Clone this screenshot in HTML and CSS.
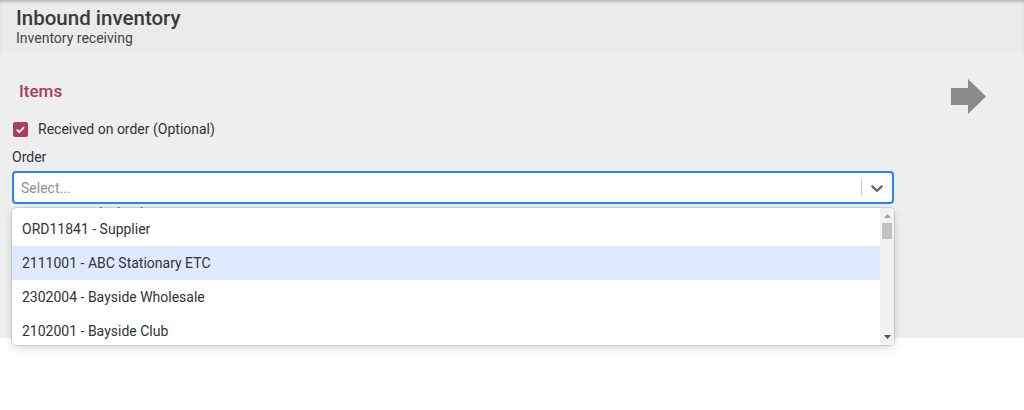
FILE: index.html
```html
<!DOCTYPE html>
<html lang="en">
<head>
    <meta charset="UTF-8">
    <meta name="viewport" content="width=device-width, initial-scale=1.0">
    <title>Inbound inventory</title>
    <link rel="stylesheet" href="styles.css">
</head>
<body>
    <div class="page-header">
        <h1>Inbound inventory</h1>
        <div class="subtitle">Inventory receiving</div>
    </div>
    <div class="main">
        <div class="form-col">
            <h2 class="section-title">Items</h2>
            <label class="check-row">
                <span class="checkbox">
                    <svg width="11" height="11" viewBox="0 0 12 12"><path d="M2 6.2l2.6 2.6L10 3.4" fill="none" stroke="#fff" stroke-width="1.8"/></svg>
                </span>
                Received on order (Optional)
            </label>
            <div class="field-label">Order</div>
            <div class="select-wrap">
                <div class="select-control">
                    <span class="placeholder">Select...</span>
                    <span class="separator"></span>
                    <svg class="chevron" width="20" height="20" viewBox="0 0 20 20"><path d="M4.516 7.548c0.436-0.446 1.043-0.481 1.576 0l3.908 3.747 3.908-3.747c0.533-0.481 1.141-0.446 1.574 0 0.436 0.445 0.408 1.197 0 1.615-0.406 0.418-4.695 4.502-4.695 4.502-0.217 0.223-0.502 0.335-0.787 0.335s-0.57-0.112-0.789-0.335c0 0-4.287-4.084-4.695-4.502s-0.436-1.17 0-1.615z" fill="#666"/></svg>
                </div>
                <div class="hint">Scanning at order level</div>
                <div class="menu">
                    <div class="menu-list">
                        <div class="option">ORD11841 - Supplier</div>
                        <div class="option focused">2111001 - ABC Stationary ETC</div>
                        <div class="option">2302004 - Bayside Wholesale</div>
                        <div class="option">2102001 - Bayside Club</div>
                    </div>
                    <div class="scrollbar">
                        <svg class="scroll-arrow" width="7" height="4" viewBox="0 0 7 4"><path d="M0 4h7L3.5 0z" fill="#a3a3a3"/></svg>
                        <div class="scroll-thumb"></div>
                        <svg class="scroll-arrow down" width="7" height="4" viewBox="0 0 7 4"><path d="M0 0h7L3.5 4z" fill="#505050"/></svg>
                    </div>
                </div>
            </div>
        </div>
        <div class="next-btn">
            <svg width="36" height="35" viewBox="0 0 36 35"><path d="M0 9h17V0l18 17.5L17 35v-9H0z" fill="#8a8a8a"/></svg>
        </div>
    </div>
</body>
</html>
```

FILE: styles.css
```css
body {
    margin: 0;
    min-height: 100vh;
    font-family: Roboto, 'Liberation Sans', Arial, sans-serif;
    color: #333;
    background: #fff;
}
.page-header {
    background: #ebebeb;
    padding: 6px 16px 7px 16px;
    box-shadow: inset 0 3px 3px -1px rgba(0,0,0,0.22);
}
.page-header h1 {
    margin: 0;
    font-size: 20.5px;
    font-weight: 500;
    line-height: 24px;
    color: #3a3a3a;
}
.subtitle {
    font-size: 14px;
    line-height: 16px;
    color: #444;
}
.main {
    background: #eeeeee;
    height: 285px;
    display: flex;
    padding-left: 12px;
}
.form-col {
    width: 882px;
    display: flex;
    flex-direction: column;
}
.section-title {
    margin: 27px 0 0 7px;
    font-size: 17px;
    font-weight: 500;
    line-height: 22px;
    color: #a63d5e;
}
.check-row {
    margin-top: 18px;
    display: flex;
    align-items: center;
    gap: 10px;
    height: 18px;
    font-size: 14px;
}
.checkbox {
    width: 15px;
    height: 15px;
    margin-left: 1px;
    border-radius: 2px;
    background: #a94064;
    display: flex;
    align-items: center;
    justify-content: center;
}
.field-label {
    margin-top: 11px;
    font-size: 14px;
    line-height: 16px;
}
.select-wrap {
    position: relative;
    margin-top: 6px;
}
.select-control {
    height: 33px;
    box-sizing: border-box;
    border: 2px solid #2684ff;
    border-radius: 4px;
    background: #fff;
    display: flex;
    align-items: center;
    padding-left: 7px;
}
.placeholder {
    flex: 1;
    font-size: 14px;
    color: #8f8f8f;
}
.separator {
    width: 1px;
    height: 17px;
    background: #ccc;
}
.chevron {
    margin: 0 5px 0 5px;
}
.hint {
    margin-top: 2px;
    font-size: 13px;
    line-height: 14px;
}
.menu {
    position: absolute;
    z-index: 10;
    top: 37px;
    left: 0;
    right: 0;
    height: 137px;
    display: flex;
    overflow: hidden;
    background: #fff;
    border-radius: 4px;
    box-shadow: 0 0 0 1px rgba(0,0,0,0.1), 0 3px 9px rgba(0,0,0,0.16);
}
.menu-list {
    flex: 1;
    padding-top: 4px;
}
.option {
    height: 34px;
    line-height: 34px;
    padding-left: 10px;
    font-size: 14px;
    color: #333;
}
.option.focused {
    background: #deebff;
}
.scrollbar {
    width: 14px;
    background: #f1f1f1;
    display: flex;
    flex-direction: column;
    align-items: center;
}
.scroll-arrow {
    margin-top: 6px;
}
.scroll-arrow.down {
    margin-top: auto;
    margin-bottom: 6px;
}
.scroll-thumb {
    width: 10px;
    height: 16px;
    margin-top: 5px;
    background: #c1c1c1;
}
.next-btn {
    margin: 26px 0 0 57px;
}
```
